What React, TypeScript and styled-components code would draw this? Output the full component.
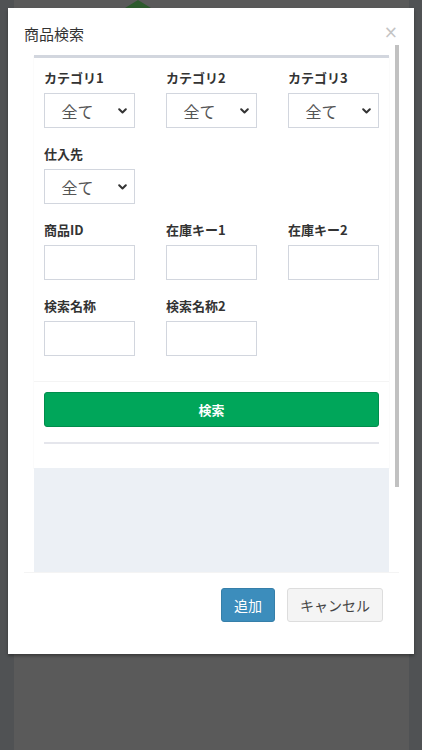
import styled, { createGlobalStyle } from 'styled-components';

const GlobalStyle = createGlobalStyle`
  html, body {
    margin: 0;
    padding: 0;
    background: #505254;
  }
  body {
    font-family: 'Noto Sans CJK JP', 'Noto Sans', sans-serif;
    color: #333;
  }
  * {
    box-sizing: border-box;
  }
`;

const Screen = styled.div`
  position: relative;
  width: 422px;
  height: 750px;
  overflow: hidden;
  background: #505254;
`;

const PageBehind = styled.div`
  height: 100%;
  margin: 0 13px 0 14px;
  background: #5a5a5a;
`;

const LogoPeak = styled.div`
  width: 0;
  height: 0;
  margin-left: 98px;
  border-left: 26px solid transparent;
  border-right: 26px solid transparent;
  border-bottom: 16px solid #2d5b2d;
`;

const Modal = styled.div`
  position: absolute;
  top: 8px;
  left: 8px;
  width: 406px;
  height: 646px;
  display: flex;
  flex-direction: column;
  background: #fff;
  box-shadow: 0 2px 3px rgba(0, 0, 0, 0.35);
`;

const Header = styled.div`
  display: flex;
  justify-content: space-between;
  align-items: flex-start;
  height: 37px;
  padding: 15px 16px 0 16px;
`;

const Title = styled.h4`
  margin: 0;
  font-size: 15px;
  font-weight: 400;
  line-height: 22px;
  color: #333;
`;

const Close = styled.button`
  border: 0;
  background: none;
  padding: 0;
  margin-top: -1px;
  font-family: 'DejaVu Sans', sans-serif;
  font-size: 17px;
  line-height: 20px;
  color: #c4c4c4;
  cursor: pointer;
`;

const Body = styled.div`
  position: relative;
  height: 527px;
  margin: 0 15px 0 16px;
  overflow: hidden;
`;

const BodyContent = styled.div`
  padding: 10px 10px 10px 10px;
`;

const ScrollThumb = styled.div`
  position: absolute;
  top: 0;
  right: 0;
  width: 4px;
  height: 442px;
  background: #c1c1c1;
`;

const Box = styled.div`
  background: #fff;
  border-top: 3px solid #d2d6de;
  box-shadow: 0 1px 1px rgba(0, 0, 0, 0.1);
`;

const BoxBody = styled.div`
  padding: 10px;
`;

const FieldRow = styled.div`
  display: grid;
  grid-template-columns: repeat(3, 91px);
  column-gap: 31px;
  margin-bottom: 16px;

  &:last-child {
    margin-bottom: 15px;
  }
`;

const Field = styled.div`
  display: flex;
  flex-direction: column;
`;

const Label = styled.label`
  font-size: 13px;
  font-weight: 700;
  line-height: 20px;
  margin-bottom: 5px;
  color: #333;
  white-space: nowrap;
`;

const SelectWrap = styled.div`
  position: relative;
  height: 35px;
`;

const Select = styled.select`
  width: 100%;
  height: 35px;
  border: 1px solid #d2d6de;
  border-radius: 0;
  background: #fff;
  appearance: none;
  padding: 0 24px 0 0;
  text-align: center;
  text-align-last: center;
  font-family: 'Noto Sans CJK JP', sans-serif;
  font-size: 16px;
  color: #555;
  outline: none;
`;

const Chevron = styled.svg`
  position: absolute;
  right: 8px;
  top: 15px;
  pointer-events: none;
`;

const TextInput = styled.input`
  width: 100%;
  height: 35px;
  border: 1px solid #d2d6de;
  border-radius: 0;
  padding: 0 8px;
  font-size: 14px;
  outline: none;
`;

const BoxFooter = styled.div`
  border-top: 1px solid #f4f4f4;
  padding: 10px;
`;

const SearchButton = styled.button`
  display: block;
  width: 100%;
  height: 35px;
  border: 1px solid #008d4c;
  border-radius: 3px;
  background: #00a65a;
  color: #fff;
  font-family: 'Noto Sans CJK JP', sans-serif;
  font-size: 13px;
  font-weight: 700;
  cursor: pointer;
`;

const Rule = styled.hr`
  height: 2px;
  margin: 15px 0 14px;
  border: 0;
  background: #e5e6ec;
`;

const ResultArea = styled.div`
  height: 195px;
  background: #ecf0f5;
`;

const Footer = styled.div`
  flex: 1;
  display: flex;
  justify-content: flex-end;
  align-items: flex-start;
  gap: 12px;
  margin: 0 15px 0 16px;
  padding: 15px 16px 0 0;
  border-top: 1px solid #f4f4f4;
`;

const Button = styled.button<{ $primary?: boolean }>`
  height: 34px;
  padding: 0 12px;
  border-radius: 3px;
  border: 1px solid ${(p) => (p.$primary ? '#367fa9' : '#ddd')};
  background: ${(p) => (p.$primary ? '#3c8dbc' : '#f4f4f4')};
  color: ${(p) => (p.$primary ? '#fff' : '#444')};
  font-family: 'Noto Sans CJK JP', sans-serif;
  font-size: 14px;
  line-height: 20px;
  cursor: pointer;
`;

function SelectField({ label }: { label: string }) {
  return (
    <Field>
      <Label>{label}</Label>
      <SelectWrap>
        <Select defaultValue='all'>
          <option value='all'>全て</option>
        </Select>
        <Chevron width='9' height='6' viewBox='0 0 9 6'>
          <polyline
            points='1.2,1.2 4.5,4.5 7.8,1.2'
            fill='none'
            stroke='#333'
            strokeWidth='2'
            strokeLinecap='round'
            strokeLinejoin='round'
          />
        </Chevron>
      </SelectWrap>
    </Field>
  );
}

function InputField({ label }: { label: string }) {
  return (
    <Field>
      <Label>{label}</Label>
      <TextInput type='text' />
    </Field>
  );
}

export default function App() {
  return (
    <>
      <GlobalStyle />
      <Screen>
        <PageBehind>
          <LogoPeak />
        </PageBehind>
        <Modal>
          <Header>
            <Title>商品検索</Title>
            <Close aria-label='close'>×</Close>
          </Header>
          <Body>
            <BodyContent>
              <Box>
                <BoxBody>
                  <FieldRow>
                    <SelectField label='カテゴリ1' />
                    <SelectField label='カテゴリ2' />
                    <SelectField label='カテゴリ3' />
                  </FieldRow>
                  <FieldRow>
                    <SelectField label='仕入先' />
                  </FieldRow>
                  <FieldRow>
                    <InputField label='商品ID' />
                    <InputField label='在庫キー1' />
                    <InputField label='在庫キー2' />
                  </FieldRow>
                  <FieldRow>
                    <InputField label='検索名称' />
                    <InputField label='検索名称2' />
                  </FieldRow>
                </BoxBody>
                <BoxFooter>
                  <SearchButton>検索</SearchButton>
                  <Rule />
                </BoxFooter>
              </Box>
              <ResultArea />
            </BodyContent>
            <ScrollThumb />
          </Body>
          <Footer>
            <Button $primary>追加</Button>
            <Button>キャンセル</Button>
          </Footer>
        </Modal>
      </Screen>
    </>
  );
}
